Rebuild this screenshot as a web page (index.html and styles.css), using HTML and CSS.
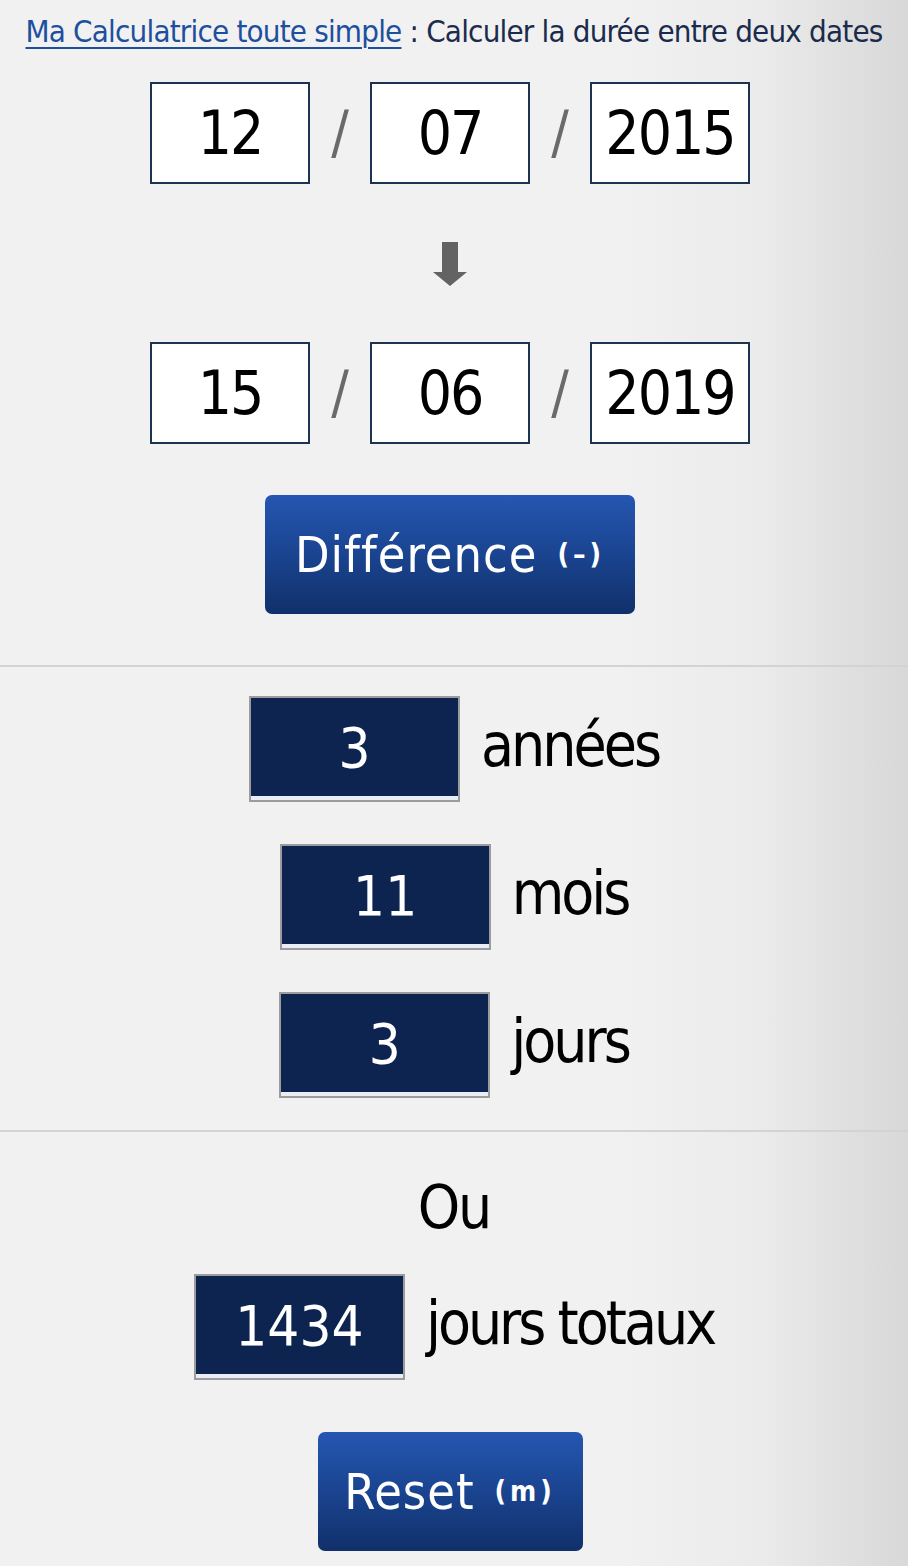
FILE: index.html
```html
<!DOCTYPE html>
<html lang="fr">
<head>
<meta charset="utf-8">
<title>Calculer la durée entre deux dates</title>
<link rel="stylesheet" href="styles.css">
</head>
<body>
<main class="page">
  <h1 class="title"><a class="title-link" href="#">Ma Calculatrice toute simple</a> : Calculer la durée entre deux dates</h1>

  <section class="dates">
    <div class="date-row">
      <div class="date-box">12</div>
      <span class="slash">/</span>
      <div class="date-box">07</div>
      <span class="slash">/</span>
      <div class="date-box">2015</div>
    </div>
    <div class="arrow">
      <svg width="34" height="46" viewBox="0 0 34 46"><path d="M9 0 H25 V30 H34 L17 44 L0 30 H9 Z" fill="#636363"/></svg>
    </div>
    <div class="date-row">
      <div class="date-box">15</div>
      <span class="slash">/</span>
      <div class="date-box">06</div>
      <span class="slash">/</span>
      <div class="date-box">2019</div>
    </div>
    <button class="btn btn-diff">Différence <span class="key">(–)</span></button>
  </section>

  <hr class="sep">

  <section class="results">
    <div class="res-row"><div class="res-box">3</div><span class="res-label">années</span></div>
    <div class="res-row"><div class="res-box">11</div><span class="res-label">mois</span></div>
    <div class="res-row"><div class="res-box">3</div><span class="res-label">jours</span></div>
  </section>

  <hr class="sep">

  <section class="total">
    <p class="ou">Ou</p>
    <div class="res-row"><div class="res-box res-box-wide">1434</div><span class="res-label">jours totaux</span></div>
    <button class="btn btn-reset">Reset <span class="key">(m)</span></button>
  </section>
</main>
</body>
</html>
```

FILE: styles.css
```css
html, body {
  margin: 0;
  padding: 0;
}
body {
  width: 908px;
  min-height: 1566px;
  background: linear-gradient(to right, #f1f1f1 0, #f1f1f1 620px, #ebebeb 760px, #d8d8d8 908px);
  font-family: "Liberation Sans Narrow", "DejaVu Sans Condensed", "DejaVu Sans", sans-serif;
  font-stretch: condensed;
  color: #000;
}
.page {
  display: flex;
  flex-direction: column;
}
.title {
  margin: 0;
  padding-top: 13px;
  height: 57px;
  font-size: 31px;
  font-weight: normal;
  text-align: center;
  color: #1b2b4c;
  white-space: nowrap;
  letter-spacing: -0.8px;
}
.title-link {
  color: #1d4f9e;
  text-decoration: underline;
  text-decoration-thickness: 2px;
  text-underline-offset: 5px;
}
.dates {
  display: flex;
  flex-direction: column;
  align-items: center;
  padding-top: 12px;
  padding-right: 8px;
}
.date-row {
  display: flex;
  align-items: center;
}
.date-box {
  width: 156px;
  height: 98px;
  border: 2px solid #1c3452;
  background: #fff;
  display: flex;
  align-items: center;
  justify-content: center;
  font-size: 60px;
  letter-spacing: -2px;
  color: #000;
}
.slash {
  width: 60px;
  text-align: center;
  font-size: 58px;
  color: #6a6a6a;
}
.arrow {
  height: 158px;
  display: flex;
  align-items: center;
  justify-content: center;
  padding-top: 4px;
  box-sizing: border-box;
}
.arrow svg {
  display: block;
}
.btn {
  border: 0;
  border-radius: 7px;
  background: linear-gradient(to bottom, #2556b1 0, #1a4490 50%, #11306a 100%);
  color: #fff;
  font-family: inherit;
  font-stretch: condensed;
  font-size: 50px;
  letter-spacing: 1px;
  height: 119px;
  padding: 0;
  display: flex;
  align-items: center;
  justify-content: center;
  gap: 20px;
}
.btn .key {
  font-size: 28px;
  font-weight: bold;
  letter-spacing: 4px;
}
.btn-diff {
  width: 370px;
  margin-top: 51px;
}
.sep {
  width: 100%;
  margin: 51px 0 0;
  border: 0;
  height: 2px;
  background: #d3d3d3;
}
.results {
  display: flex;
  flex-direction: column;
  align-items: center;
  gap: 42px;
  padding-top: 29px;
}
.res-row {
  display: flex;
  align-items: center;
  gap: 21px;
}
.res-box {
  box-sizing: border-box;
  width: 211px;
  height: 106px;
  border: 2px solid #9c9c9c;
  background: #0e2450;
  box-shadow: inset 0 -4px 0 #e9eef6;
  color: #fff;
  display: flex;
  align-items: center;
  justify-content: center;
  font-size: 56px;
  padding-bottom: 4px;
}
.res-box-wide {
  letter-spacing: 0;
}
.res-label {
  font-size: 60px;
  letter-spacing: -3px;
  color: #000;
  padding-bottom: 8px;
}
.results + .sep {
  margin-top: 32px;
}
.total {
  display: flex;
  flex-direction: column;
  align-items: center;
}
.ou {
  margin: 0;
  padding-top: 44px;
  height: 102px;
  box-sizing: border-box;
  font-size: 60px;
  line-height: 62px;
  letter-spacing: -2px;
}
.total .res-row {
  margin-top: 40px;
}
.btn-reset {
  width: 265px;
  margin-top: 52px;
  margin-right: 8px;
}
```
